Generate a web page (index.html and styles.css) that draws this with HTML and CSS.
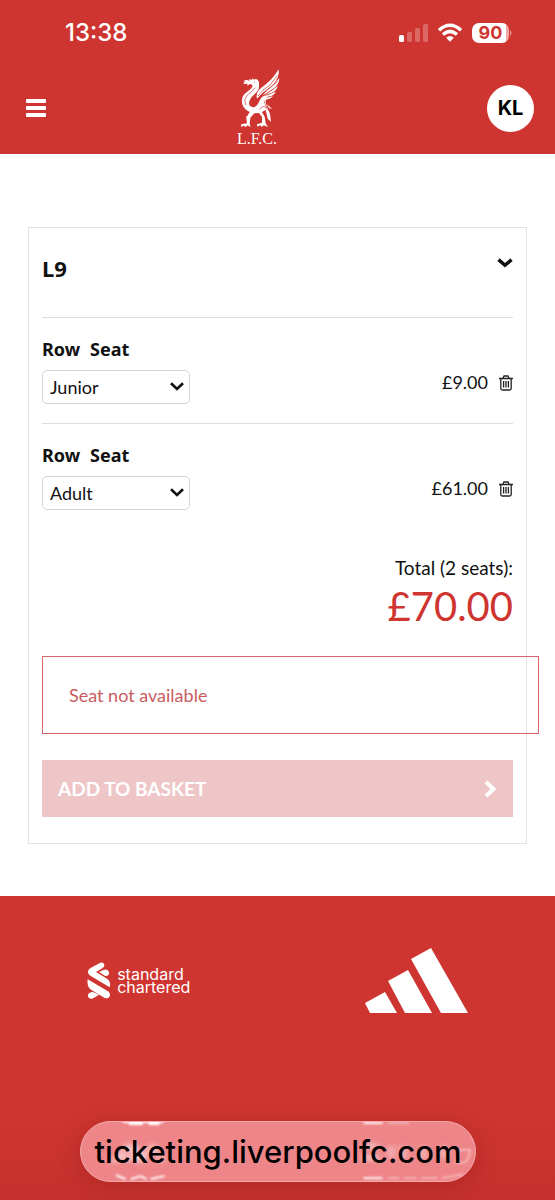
FILE: index.html
```html
<!DOCTYPE html>
<html lang="en">
<head>
<meta charset="utf-8">
<meta name="viewport" content="width=device-width, initial-scale=1">
<title>Liverpool FC Ticketing</title>
<link rel="stylesheet" href="styles.css">
</head>
<body>
<header class="header">
  <div class="status">
    <time class="clock">13:38</time>
    <div class="indicators">
      <svg width="29" height="20" viewBox="0 0 29 20" fill="#fff" aria-hidden="true"><rect y="12" width="5" height="7" rx="1.5"/><g opacity=".25"><rect x="8" y="9" width="5" height="10" rx="1.5"/><rect x="16" y="5" width="5" height="14" rx="1.5"/><rect x="24" y="1" width="5" height="18" rx="1.5"/></g></svg>
      <svg width="26" height="20" viewBox="0 0 26 20" fill="none" stroke="#fff" stroke-width="3.4" aria-hidden="true"><path d="M2 7.2Q13-2.8 24 7.2"/><path d="M6 11.6Q13 5.2 20 11.6"/><path d="M9.2 14.8Q13 11.2 16.8 14.8L13 18.8Z" fill="#fff" stroke="none"/></svg>
      <span class="battery"><span class="level">90</span><svg width="4" height="8" viewBox="0 0 4 8" aria-hidden="true"><path d="M1 1Q4 4 1 7Z" fill="#e99a98"/></svg></span>
    </div>
  </div>
  <nav class="nav">
    <button class="icon-button" type="button" aria-label="Menu"><svg width="20" height="18" viewBox="0 0 20 18" fill="#fff"><rect width="20" height="4" rx="1"/><rect y="7" width="20" height="4" rx="1"/><rect y="14" width="20" height="4" rx="1"/></svg></button>
    <a class="crest" href="#" aria-label="Liverpool FC home">
      <svg width="44" height="60" viewBox="38 26 132 180" aria-hidden="true">
        <g fill="#fff">
          <path d="M103 66Q98 56 88 61L86 56L82 62L75 58L76 65Q66 59 57 66L65 68L57 70L59 74L70 73L69 80L76 74Q86 74 84 82Q81 89 68 98Q48 111 54 135Q59 150 76 158L69 170Q64 170 66 176L68 192L51 195L50 203L58 199L65 203L69 198L79 203L76 193L78 175L90 162L104 161L113 173L113 190L98 195L99 202L107 198L113 203L118 198L131 203L124 192L121 172L113 158L124 152L130 178L140 187L137 164L127 139Q119 118 133 108Q112 105 105 126Q96 146 84 143Q70 140 76 123Q80 113 94 101Q108 90 103 66Z"/>
          <path d="M98 118Q93 99 111 85Q142 65 163 30Q167 54 145 77L114 102Z"/>
          <path d="M165 56Q165 77 144 90L114 109Q127 91 145 79Z"/>
          <path d="M160 79Q158 94 142 100L121 108L145 92Z"/>
          <path d="M154 97Q150 108 136 111L118 115L138 104Z"/>
          <path d="M146 111Q139 120 123 121L119 117Z"/>
          <path d="M126 133L143 148L135 147Z"/>
        </g>
        <g fill="none" stroke="#cf3530" stroke-width="2">
          <path d="M89 67L92 69M93 85Q84 97 68 108Q57 121 64 137M101 110Q113 92 137 77L159 49M100 118Q115 99 134 88L160 66M105 150Q118 136 126 146M119 124L129 151"/>
        </g>
      </svg>
      <span class="crest-name">L.F.C.</span>
    </a>
    <button class="avatar" type="button" aria-label="Account KL">KL</button>
  </nav>
</header>

<main class="main">
  <section class="basket">
    <div class="block-head">
      <h1 class="block-name">L9</h1>
      <button class="icon-button" type="button" aria-label="Collapse"><svg width="16" height="10" viewBox="0 0 16 10" fill="none" stroke="#111" stroke-width="3.5"><path d="M1.5 1.7L8 7.3L14.5 1.7"/></svg></button>
    </div>
    <div class="seat">
      <label class="seat-label" for="seat-1"><span>Row</span><span>Seat</span></label>
      <div class="seat-line">
        <span class="picker"><select class="select" id="seat-1"><option>Junior</option><option>Adult</option></select><svg class="caret" width="14" height="9" viewBox="0 0 14 9" fill="none" stroke="#111" stroke-width="2.6"><path d="M1 1.2L7 7L13 1.2"/></svg></span>
        <span class="price">£9.00</span>
        <button class="icon-button" type="button" aria-label="Remove seat"><svg width="14" height="16" viewBox="0 0 14 16" fill="none" stroke="#222" stroke-width="1.3"><path d="M0 3.5H14M4 3L5 1H9L10 3M1.8 3.5V13.5Q1.8 15 3.3 15H10.7Q12.2 15 12.2 13.5V3.5M4.6 6V12.5M7 6V12.5M9.4 6V12.5"/></svg></button>
      </div>
    </div>
    <div class="seat">
      <label class="seat-label" for="seat-2"><span>Row</span><span>Seat</span></label>
      <div class="seat-line">
        <span class="picker"><select class="select" id="seat-2"><option>Adult</option><option>Junior</option></select><svg class="caret" width="14" height="9" viewBox="0 0 14 9" fill="none" stroke="#111" stroke-width="2.6"><path d="M1 1.2L7 7L13 1.2"/></svg></span>
        <span class="price">£61.00</span>
        <button class="icon-button" type="button" aria-label="Remove seat"><svg width="14" height="16" viewBox="0 0 14 16" fill="none" stroke="#222" stroke-width="1.3"><path d="M0 3.5H14M4 3L5 1H9L10 3M1.8 3.5V13.5Q1.8 15 3.3 15H10.7Q12.2 15 12.2 13.5V3.5M4.6 6V12.5M7 6V12.5M9.4 6V12.5"/></svg></button>
      </div>
    </div>
    <div class="total">
      <span class="total-label">Total (2 seats):</span>
      <strong class="amount">£70.00</strong>
    </div>
    <p class="alert" role="alert">Seat not available</p>
    <button class="add" type="button" disabled><span>ADD TO BASKET</span><svg width="13" height="18" viewBox="0 0 13 18" fill="none" stroke="#fff" stroke-width="4"><path d="M2 2L9.5 9L2 16"/></svg></button>
  </section>
</main>

<footer class="footer">
  <a class="sponsor" href="#">
    <svg width="24" height="38" viewBox="0 0 72 114" fill="#fff" aria-hidden="true"><path d="M40 2Q49-1 52 8Q53 14 47 18L27 30L60 50Q73 59 68 76L10 41Q-1 33 5 23Q7 20 12 17Z"/><path d="M36 30L49 24Q58 20 64 27Q70 36 61 41Q56 43 51 40Z"/><path d="M2 52L63 88Q73 96 67 105Q61 112 52 107L12 83Q-1 74 2 52Z"/><path d="M36 98L21 107Q12 113 5 107Q-1 98 8 92Q14 88 20 91Z"/></svg>
    <span class="sponsor-name"><span>standard</span><span>chartered</span></span>
  </a>
  <a class="sponsor" href="#" aria-label="adidas">
    <svg width="103" height="65" viewBox="0 0 103 65" fill="#fff"><path d="M0 55L20 44L32 65H5ZM23 33L43 22L67 65H40ZM46 11L66 0L103 65H76Z"/></svg>
  </a>
</footer>

<button class="address" type="button">
  <svg class="reflection" viewBox="0 0 396 61" preserveAspectRatio="none" fill="none" stroke="#fff" aria-hidden="true">
    <g class="soft" stroke-width="4"><path d="M32 42L48 24L60 42M54 25L64 40M58 40L74 24M72 25L82 41M38 37H56M284 25H298M283 37H299M312 25V38M324 25V38M344 25V38M365 25V38" opacity=".65"/></g>
    <g class="soft-small" stroke-width="2"><path d="M42 0H83M48 2H62M68 2H79M35 55L45 59M50 59L60 56L66 59M70 59L84 56M284 1H303M284 58H303"/><path d="M309 1H330M308 58H320M325 58H337M342 58H358M363 58L384 54M380 29H391Q390 39 385 42H377Z" opacity=".4"/></g>
  </svg>
  <span class="address-text">ticketing.liverpoolfc.com</span>
</button>
</body>
</html>
```
FILE: styles.css
```css
* { box-sizing: border-box; }
body {
  margin: 0;
  min-height: 100vh;
  display: flex;
  flex-direction: column;
  position: relative;
  background: #fff;
  color: #111;
  font: 18px/24px Lato, sans-serif;
}
button { border: 0; padding: 0; background: none; color: inherit; font: inherit; cursor: pointer; }
a { color: inherit; text-decoration: none; }
svg { display: block; flex: none; }
.header { background: #cf3530; color: #fff; }
.status {
  height: 66px;
  padding: 0 42px 0 65px;
  display: flex;
  align-items: center;
  justify-content: space-between;
}
.clock { font: 500 24px/32px Inter, sans-serif; }
.indicators { display: flex; align-items: center; gap: 9px; }
.battery { display: flex; align-items: center; }
.level {
  width: 37px;
  border-radius: 7px;
  background: linear-gradient(90deg, #fff 92%, #efaaa8 92%);
  color: #cf3530;
  font: 700 18px/20px Inter, sans-serif;
  text-align: center;
}
.nav {
  height: 88px;
  padding: 0 21px 4px 26px;
  display: grid;
  grid-template-columns: 5fr auto 6fr;
  align-items: center;
}
.icon-button { justify-self: start; }
.crest { display: flex; flex-direction: column; align-items: flex-start; gap: 2px; }
.crest-name { font: 16px/18px "Liberation Serif", serif; }
.avatar {
  justify-self: end;
  width: 47px;
  height: 47px;
  border-radius: 50%;
  background: #fff;
  color: #000;
  font: 700 20px/24px Inter, sans-serif;
}
.main { padding: 73px 28px 52px; }
.basket { border: 1px solid #e3e3e3; padding: 0 13px 26px; }
.block-head {
  height: 90px;
  padding-bottom: 10px;
  display: flex;
  align-items: center;
  justify-content: space-between;
  border-bottom: 1px solid #ddd;
}
.block-head .icon-button { margin-bottom: 10px; }
.block-name { margin: 0; font: 700 22px/24px "Noto Sans", sans-serif; }
.seat { padding: 19px 0 19px; }
.seat + .seat { border-top: 1px solid #ddd; }
.seat-label { display: flex; gap: 10px; margin-bottom: 9px; font: 700 18px/24px "Noto Sans", Lato, sans-serif; }
.seat-line { display: flex; align-items: center; }
.picker { position: relative; margin-right: auto; }
.select {
  display: block;
  appearance: none;
  width: 148px;
  height: 34px;
  padding: 0 30px 0 7px;
  border: 1px solid #d4d4d4;
  border-radius: 5px;
  background: #fff;
  color: #111;
  font: 18px/24px Lato, sans-serif;
}
.caret { position: absolute; right: 6px; top: 12px; pointer-events: none; }
.price { margin: 0 11px 10px 0; }
.seat-line .icon-button { margin-bottom: 8px; }
.total { display: flex; flex-direction: column; align-items: flex-end; padding-top: 27px; }
.total-label { font-size: 19px; }
.amount { color: #cf3530; font-weight: 400; font-size: 40px; line-height: 52px; }
.alert {
  margin: 24px -26px 26px 0;
  padding: 26px;
  border: 1px solid #d5666a;
  color: #c95c60;
}
.add {
  width: 100%;
  height: 57px;
  padding: 0 16px;
  display: flex;
  align-items: center;
  justify-content: space-between;
  background: #eec6c8;
  color: #fff;
  font-weight: 700;
  font-size: 19px;
}
.footer {
  flex: 1;
  display: grid;
  grid-template-columns: 1fr 1fr;
  align-items: start;
  padding-top: 52px;
  background: linear-gradient(#cf3530 70%, #c6312d);
  color: #fff;
}
.sponsor { height: 65px; display: flex; align-items: center; justify-content: center; gap: 6px; }
.sponsor-name { display: flex; flex-direction: column; font: 16px/13px Inter, sans-serif; }
.address {
  position: absolute;
  left: 80px;
  right: 79px;
  bottom: 18px;
  height: 61px;
  border: 1px solid #f5aaac;
  border-radius: 31px;
  overflow: hidden;
  background: #ee8689;
  color: #000;
  box-shadow: 0 4px 24px rgba(80, 0, 0, .2);
  font: 500 31px/36px Inter, sans-serif;
}
.reflection { position: absolute; inset: 0; width: 100%; height: 100%; }
.soft { filter: blur(3px); }
.soft-small { filter: blur(1px); }
.address-text { position: relative; }
```
